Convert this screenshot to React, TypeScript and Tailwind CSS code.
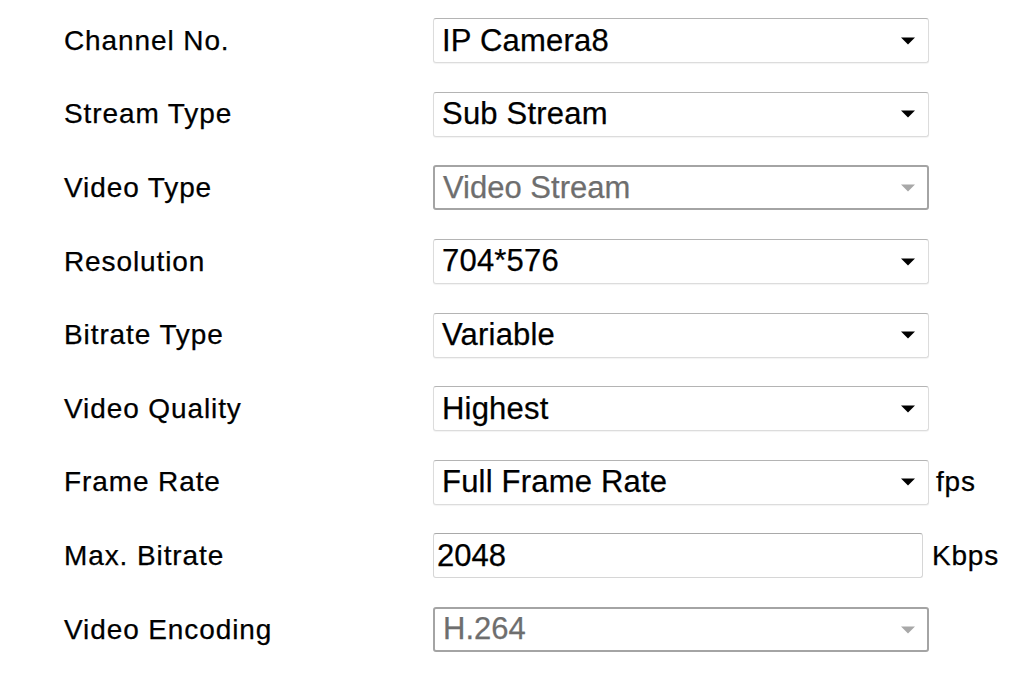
import React from 'react';

type Row = {
  label: string;
  value: string;
  kind: 'select' | 'input';
  disabled?: boolean;
  unit?: string;
};

const rows: Row[] = [
  { label: 'Channel No.', value: 'IP Camera8', kind: 'select' },
  { label: 'Stream Type', value: 'Sub Stream', kind: 'select' },
  { label: 'Video Type', value: 'Video Stream', kind: 'select', disabled: true },
  { label: 'Resolution', value: '704*576', kind: 'select' },
  { label: 'Bitrate Type', value: 'Variable', kind: 'select' },
  { label: 'Video Quality', value: 'Highest', kind: 'select' },
  { label: 'Frame Rate', value: 'Full Frame Rate', kind: 'select', unit: 'fps' },
  { label: 'Max. Bitrate', value: '2048', kind: 'input', unit: 'Kbps' },
  { label: 'Video Encoding', value: 'H.264', kind: 'select', disabled: true },
];

const Arrow = ({ disabled }: { disabled?: boolean }) => (
  <svg width="16" height="8" viewBox="0 0 16 8" className="shrink-0">
    <path d="M1 0.5 L15 0.5 L8 7.5 Z" fill={disabled ? '#a8a8a8' : '#000'} />
  </svg>
);

const Field = ({ row }: { row: Row }) => {
  if (row.kind === 'input') {
    return (
      <div className="flex h-[45px] w-[490px] items-center rounded-[3px] border border-[#d6d6d6] border-t-[#a9a9a9] bg-white pl-[3px] text-[31px] text-black">
        {row.value}
      </div>
    );
  }
  if (row.disabled) {
    return (
      <div className="flex h-[45px] w-[496px] items-center justify-between rounded-[3px] border-2 border-[#a4a4a4] bg-white pl-[8px] pr-[11px] text-[31px] text-[#6e6e6e]">
        <span>{row.value}</span>
        <Arrow disabled />
      </div>
    );
  }
  return (
    <div className="flex h-[45px] w-[496px] items-center justify-between rounded-[3px] border border-[#dcdcdc] border-t-[#b4b4b4] bg-white pl-[8px] pr-[12px] text-[31px] text-black shadow-[0_1px_1px_rgba(0,0,0,0.05)]">
      <span className="tracking-[0.2px]">{row.value}</span>
      <Arrow />
    </div>
  );
};

export default function App() {
  return (
    <div
      className="h-[692px] w-[1024px] overflow-hidden bg-white pt-[4px] [-webkit-text-stroke:0.25px_currentColor]"
      style={{ fontFamily: '"Liberation Sans", Arial, sans-serif' }}
    >
      <div className="grid auto-rows-[73.6px]">
        {rows.map((row) => (
          <div key={row.label} className="flex items-center">
            <div className="w-[433px] pl-[64px] text-[28px] tracking-[0.9px] text-black">{row.label}</div>
            <Field row={row} />
            {row.unit && (
              <span
                className={`text-[28px] tracking-[0.8px] text-black ${row.kind === 'input' ? 'ml-[9px]' : 'ml-[7px]'}`}
              >
                {row.unit}
              </span>
            )}
          </div>
        ))}
      </div>
    </div>
  );
}
